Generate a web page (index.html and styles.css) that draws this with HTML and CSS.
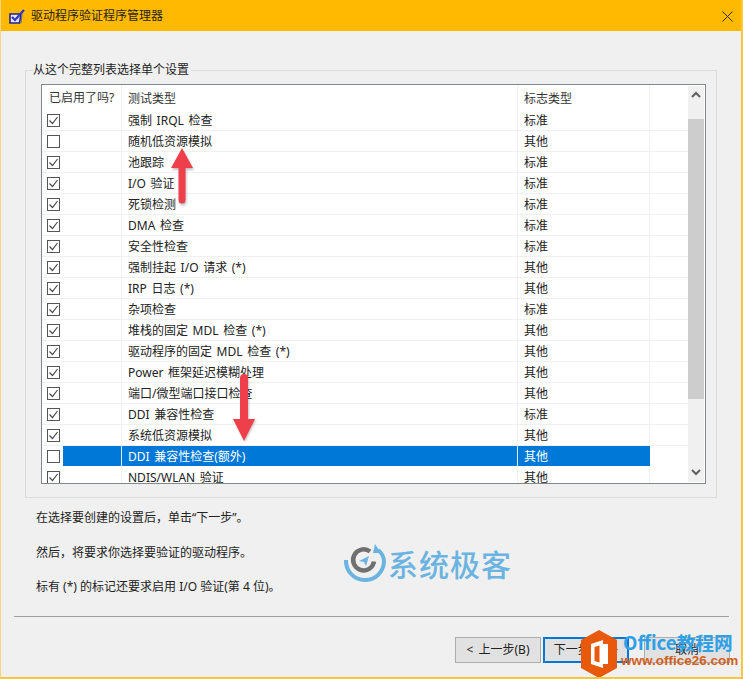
FILE: index.html
```html
<!DOCTYPE html>
<html lang="zh-CN">
<head>
<meta charset="utf-8">
<title>驱动程序验证程序管理器</title>
<link rel="stylesheet" href="styles.css">
</head>
<body>
<svg class="defs" width="0" height="0" aria-hidden="true"><defs><symbol id="tick" viewBox="0 0 11 11"><path d="M1.500 5.500 4.500 8.500 9.500 2" fill="none" stroke="#4a4a4a" stroke-width="1.200"/></symbol></defs></svg>
<div class="window">
  <header class="titlebar">
    <svg class="appicon" viewBox="0 0 17 15" width="17" height="15"><path d="M1 5H12L10.500 14H1Z" fill="#dfe3f5" stroke="#23238c" stroke-width="1.600"/><path d="M3 8l3 3 9-10" fill="none" stroke="#3333c4" stroke-width="2.200"/><path d="M13 5 12 14" stroke="#777" stroke-width="1.200"/></svg>
    <span class="title">驱动程序验证程序管理器</span>
    <svg class="close" viewBox="0 0 11 11" width="11" height="11"><path d="M.5.500l10 10M10.500.500l-10 10" stroke="#3a2c08" stroke-width="1"/></svg>
  </header>
  <main class="body">
    <section class="group">
      <h2 class="legend">从这个完整列表选择单个设置</h2>
      <div class="listbox">
        <div class="listmain">
          <div class="row head"><span class="c1 h1">已启用了吗?</span><span class="c2">测试类型</span><span class="c3">标志类型</span><span class="c4"></span></div>
          <div class="row"><span class="c1"><i class="box"><svg><use href="#tick"/></svg></i></span><span class="c2">强制 IRQL 检查</span><span class="c3">标准</span><span class="c4"></span></div>
          <div class="row"><span class="c1"><i class="box"></i></span><span class="c2">随机低资源模拟</span><span class="c3">其他</span><span class="c4"></span></div>
          <div class="row"><span class="c1"><i class="box"><svg><use href="#tick"/></svg></i></span><span class="c2">池跟踪</span><span class="c3">标准</span><span class="c4"></span></div>
          <div class="row"><span class="c1"><i class="box"><svg><use href="#tick"/></svg></i></span><span class="c2">I/O 验证</span><span class="c3">标准</span><span class="c4"></span></div>
          <div class="row"><span class="c1"><i class="box"><svg><use href="#tick"/></svg></i></span><span class="c2">死锁检测</span><span class="c3">标准</span><span class="c4"></span></div>
          <div class="row"><span class="c1"><i class="box"><svg><use href="#tick"/></svg></i></span><span class="c2">DMA 检查</span><span class="c3">标准</span><span class="c4"></span></div>
          <div class="row"><span class="c1"><i class="box"><svg><use href="#tick"/></svg></i></span><span class="c2">安全性检查</span><span class="c3">标准</span><span class="c4"></span></div>
          <div class="row"><span class="c1"><i class="box"><svg><use href="#tick"/></svg></i></span><span class="c2">强制挂起 I/O 请求 (*)</span><span class="c3">其他</span><span class="c4"></span></div>
          <div class="row"><span class="c1"><i class="box"><svg><use href="#tick"/></svg></i></span><span class="c2">IRP 日志 (*)</span><span class="c3">其他</span><span class="c4"></span></div>
          <div class="row"><span class="c1"><i class="box"><svg><use href="#tick"/></svg></i></span><span class="c2">杂项检查</span><span class="c3">标准</span><span class="c4"></span></div>
          <div class="row"><span class="c1"><i class="box"><svg><use href="#tick"/></svg></i></span><span class="c2">堆栈的固定 MDL 检查 (*)</span><span class="c3">其他</span><span class="c4"></span></div>
          <div class="row"><span class="c1"><i class="box"><svg><use href="#tick"/></svg></i></span><span class="c2">驱动程序的固定 MDL 检查 (*)</span><span class="c3">其他</span><span class="c4"></span></div>
          <div class="row"><span class="c1"><i class="box"><svg><use href="#tick"/></svg></i></span><span class="c2">Power 框架延迟模糊处理</span><span class="c3">其他</span><span class="c4"></span></div>
          <div class="row"><span class="c1"><i class="box"><svg><use href="#tick"/></svg></i></span><span class="c2">端口/微型端口接口检查</span><span class="c3">其他</span><span class="c4"></span></div>
          <div class="row"><span class="c1"><i class="box"><svg><use href="#tick"/></svg></i></span><span class="c2">DDI 兼容性检查</span><span class="c3">标准</span><span class="c4"></span></div>
          <div class="row"><span class="c1"><i class="box"><svg><use href="#tick"/></svg></i></span><span class="c2">系统低资源模拟</span><span class="c3">其他</span><span class="c4"></span></div>
          <div class="row selected"><span class="c1"><i class="box"></i></span><span class="c2">DDI 兼容性检查(额外)</span><span class="c3">其他</span><span class="c4"></span></div>
          <div class="row"><span class="c1"><i class="box"><svg><use href="#tick"/></svg></i></span><span class="c2">NDIS/WLAN 验证</span><span class="c3">其他</span><span class="c4"></span></div>
        </div>
        <div class="scrollbar">
          <svg class="sarrow" viewBox="0 0 16 33" width="16" height="33"><path d="M4 11l4-4 4 4" fill="none" stroke="#606060" stroke-width="2"/></svg>
          <div class="thumb"></div>
          <div class="track"></div>
          <svg class="sarrow down" viewBox="0 0 16 17" width="16" height="17"><path d="M4 5l4 4 4-4" fill="none" stroke="#606060" stroke-width="2"/></svg>
        </div>
      </div>
    </section>
    <div class="notes">
      <p>在选择要创建的设置后，单击“下一步”。</p>
      <p>然后，将要求你选择要验证的驱动程序。</p>
      <p>标有 (*) 的标记还要求启用 I/O 验证(第 4 位)。</p>
    </div>
    <hr class="rule">
    <footer class="buttons">
      <button class="btn" type="button">&lt; 上一步(B)</button>
      <button class="btn primary" type="button">下一步(N) &gt;</button>
      <button class="btn cancel" type="button">取消</button>
    </footer>
  </main>
  <svg class="overlay arrow-up" viewBox="0 0 24 60" width="24" height="60"><path d="M12 2 23 22H15.500V54a3 3 0 0 1-7 0V22H1Z" fill="#ee3f4a"/></svg>
  <svg class="overlay arrow-down" viewBox="0 0 24 70" width="24" height="70"><path d="M12 68 1 46H8V5a4 4 0 0 1 8 0V46H23Z" fill="#ee3f4a"/></svg>
  <div class="overlay mark-geek">
    <svg viewBox="0 0 44 44" width="44" height="44">
      <path d="M4 19a19 19 0 0 0 38 2C42 16 40 12 36 9" fill="none" stroke="#6bb3e0" stroke-width="4"/>
      <path d="M33 3l6 9-8 0z" fill="#6bb3e0"/>
      <path d="M28 10.500a10.500 10.500 0 1 0 4 10" fill="none" stroke="#707070" stroke-width="4.500"/>
      <path d="M17 20l10-5-3 10-2-4z" fill="#6bb3e0"/>
    </svg>
    <span class="geek-text">系统极客</span>
  </div>
  <div class="overlay mark-office">
    <svg viewBox="0 0 36 48" width="36" height="48"><path d="M18 0 36 10V38L18 48 0 38V10Z" fill="#e8590c"/><path d="M10 14 22 10V38L10 34ZM22 14h5V34H22" fill="#fff"/><path d="M13.500 17 18.500 15.500V32.500L13.500 31Z" fill="#e8590c"/></svg>
    <div class="office-words"><span class="office-name">Office教程网</span><span class="office-url">www.office26.com</span></div>
  </div>
</div>
</body>
</html>
```
FILE: styles.css
```css
* { box-sizing: border-box; }
html, body { margin: 0; padding: 0; }
body { width: 743px; height: 679px; overflow: hidden; font: 12px/16px "Noto Sans", "Noto Sans CJK SC", sans-serif; color: #222; }
.defs { position: absolute; }
.window { position: relative; width: 743px; height: 679px; display: flex; flex-direction: column; background: #f0f0f0; border-left: 1px solid #f7d57f; border-right: 2px solid #ffc83a; border-bottom: 2px solid #ffc83a; overflow: hidden; }
.titlebar { flex: 0 0 31px; margin: 0 -2px 0 -1px; display: flex; align-items: center; background: #ffb900; padding: 1px 10px 0 9px; }
.appicon { margin-right: 5px; }
.title { flex: 1; color: #2b2310; }
.body { flex: 1; display: flex; flex-direction: column; padding: 39px 0 0 24px; }
.group { width: 692px; height: 428px; border: 1px solid #dcdcdc; padding: 0 10px 0 15px; flex: none; }
.legend { margin: -9px 0 0 -8px; padding: 0 2px 0 0; width: max-content; height: 16px; font-size: 12px; font-weight: 400; line-height: 16px; background: #f0f0f0; color: #222; }
.listbox { margin-top: 6px; width: 665px; height: 400px; display: flex; background: #fff; border: 1px solid #828790; overflow: hidden; }
.listmain { width: 646px; flex: none; overflow: hidden; }
.row { display: flex; height: 21px; border-bottom: 1px solid #f0f0f0; line-height: 22px; }
.row.head { height: 25px; border-bottom: none; line-height: 27px; color: #333; }
.c1 { flex: 0 0 80px; display: flex; align-items: center; padding-left: 5px; border-right: 1px solid #f0f0f0; }
.c1.h1 { padding-left: 7px; white-space: nowrap; }
.c2 { flex: 0 0 396px; padding-left: 6px; border-right: 1px solid #f0f0f0; white-space: nowrap; word-spacing: 1.500px; }
.c3 { flex: 0 0 132px; padding-left: 6px; border-right: 1px solid #f0f0f0; }
.c4 { flex: 1; }
.box { display: block; width: 13px; height: 13px; border: 1px solid #555; background: #fff; }
.box svg { display: block; width: 11px; height: 11px; }
.selected .c1 { background: linear-gradient(to right, transparent 21px, #0078d7 21px); border-right-color: #dcebf8; }
.selected .c2, .selected .c3 { background: #0078d7; color: #fff; border-right-color: #dcebf8; }
.selected .c3 { border-right-color: #0078d7; }
.selected { height: 20px; margin-bottom: 1px; border-bottom: none; }
.scrollbar { width: 16px; margin: 1px 1px 1px 0; display: flex; flex-direction: column; background: #f0f0f0; }
.sarrow { flex: none; display: block; }
.thumb { flex: 0 0 280px; background: #cdcdcd; }
.track { flex: 1; }
.notes { margin-left: 11px; padding-top: 12px; }
.notes p { margin: 0 0 18px; height: 16.500px; color: #222; }
.rule { width: 715px; margin: 2.500px 0 0 -11px; border: 0; height: 1px; background: #a0a0a0; flex: none; }
.buttons { display: flex; margin: 20px 0 0 430px; }
.btn { width: 86px; height: 26px; padding: 0; background: #e1e1e1; border: 1px solid #adadad; font: inherit; color: #222; word-spacing: 2px; }
.primary { margin-left: 2px; border: 2px solid #0078d7; }
.cancel { margin-left: 15px; }
.overlay { position: absolute; }
.arrow-up { left: 169px; top: 146px; filter: drop-shadow(1px 2px 1px rgba(0,0,0,.25)); }
.arrow-down { left: 231px; top: 373px; filter: drop-shadow(1px 1px 1px rgba(0,0,0,.25)); }
.mark-geek { left: 341px; top: 541px; display: flex; align-items: center; gap: 2px; }
.geek-text { font: 500 30px/40px "Noto Sans CJK SC", sans-serif; color: #6bb3e0; letter-spacing: 1px; white-space: nowrap; }
.mark-office { left: 580px; top: 630px; display: flex; }
.office-words { display: flex; flex-direction: column; margin-left: 6px; }
.office-name { font: 700 18.700px/24px "Noto Sans CJK SC", sans-serif; color: #2ea0e6; white-space: nowrap; }
.office-url { margin: -1px 0 0 -2px; font: 700 13.500px/15px "Liberation Sans", sans-serif; color: #d0611f; white-space: nowrap; }
```
